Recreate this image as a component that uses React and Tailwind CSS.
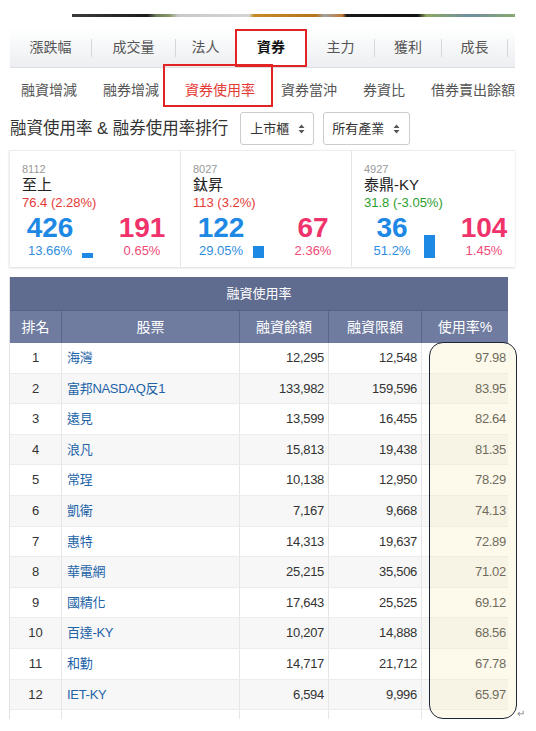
import React from 'react';

const mainTabs = [
  { label: '漲跌幅', w: 'w-[82px]', sep: true },
  { label: '成交量', w: 'w-[84px]', sep: true },
  { label: '法人', w: 'w-[59px]' },
  { label: '資券', w: 'w-[72px]', active: true },
  { label: '主力', w: 'w-[68px]', sep: true },
  { label: '獲利', w: 'w-[67px]', sep: true },
  { label: '成長', w: 'w-[66px]', sep: true },
];

const subTabs = ['融資增減', '融券增減', '資券使用率', '資券當沖', '券資比', '借券賣出餘額'];

const cards = [
  { code: '8112', name: '至上', change: '76.4 (2.28%)', up: true, a: '426', ap: '13.66%', b: '191', bp: '0.65%', bar: 5 },
  { code: '8027', name: '鈦昇', change: '113 (3.2%)', up: true, a: '122', ap: '29.05%', b: '67', bp: '2.36%', bar: 12 },
  { code: '4927', name: '泰鼎-KY', change: '31.8 (-3.05%)', up: false, a: '36', ap: '51.2%', b: '104', bp: '1.45%', bar: 23 },
];

const rows = [
  ['1', '海灣', '12,295', '12,548', '97.98'],
  ['2', '富邦NASDAQ反1', '133,982', '159,596', '83.95'],
  ['3', '遠見', '13,599', '16,455', '82.64'],
  ['4', '浪凡', '15,813', '19,438', '81.35'],
  ['5', '常珵', '10,138', '12,950', '78.29'],
  ['6', '凱衛', '7,167', '9,668', '74.13'],
  ['7', '惠特', '14,313', '19,637', '72.89'],
  ['8', '華電網', '25,215', '35,506', '71.02'],
  ['9', '國精化', '17,643', '25,525', '69.12'],
  ['10', '百達-KY', '10,207', '14,888', '68.56'],
  ['11', '和勤', '14,717', '21,712', '67.78'],
  ['12', 'IET-KY', '6,594', '9,996', '65.97'],
  ['', '', '', '', ''],
];

function SortArrows() {
  return (
    <svg width="7" height="10" viewBox="0 0 7 10" className="fill-[#555]">
      <path d="M3.5 0.5 L6.5 4 H0.5Z M0.5 6 H6.5 L3.5 9.5Z" />
    </svg>
  );
}

function StockCard({ card }) {
  return (
    <div className="w-[171px] shrink-0 border-r border-[#e6e6e6] pl-[12px] pt-[11px] pb-[9px]">
      <div className="text-[11px] leading-[14px] text-[#999]">{card.code}</div>
      <div className="text-[15px] leading-[18px] text-[#222]">{card.name}</div>
      <div className={`text-[13px] leading-[18px] ${card.up ? 'text-[#e53935]' : 'text-[#2ca02c]'}`}>
        {card.change}
      </div>
      <div className="flex items-end">
        <div className="w-[56px] flex flex-col items-center">
          <div className="text-[28px] leading-[32px] font-bold text-[#1e88e5]">{card.a}</div>
          <div className="text-[13px] leading-[14px] text-[#2f8de0]">{card.ap}</div>
        </div>
        <div className="w-[36px] pl-[4px] flex items-end">
          <div className="w-[11px] bg-[#1e88e5]" style={{ height: card.bar }} />
        </div>
        <div className="w-[56px] flex flex-col items-center">
          <div className="text-[28px] leading-[32px] font-bold text-[#f0336b]">{card.b}</div>
          <div className="text-[13px] leading-[14px] text-[#ef4a78]">{card.bp}</div>
        </div>
      </div>
    </div>
  );
}

export default function App() {
  return (
    <div className="relative w-[536px] h-[731px] overflow-hidden bg-white font-['Liberation_Sans','Noto_Sans_CJK_TC',sans-serif] text-[#333]">
      {/* banner strip */}
      <div className="pt-[14px]">
        <div className="ml-[72px] w-[443px] h-[3px] bg-[linear-gradient(90deg,#3a3a3a_0%,#1c1c1c_17%,#6b7a5a_19%,#8a9a6a_22%,#c9c9c9_24%,#d4d4d4_40%,#c98a2a_41%,#b5741c_55%,#a0a0a0_57%,#c07a30_61%,#1a1a1a_62%,#121212_78%,#8ba860_80%,#6f8ea0_90%,#8aa870_100%)]" />
      </div>

      {/* main tabs */}
      <div className="mt-[11px] ml-[10px] w-[505px] h-[40px] flex items-stretch bg-gradient-to-b from-white to-[#eceef1] border-b border-[#dcdfe3]">
        {mainTabs.map((t) => (
          <div key={t.label} className={`${t.w} flex items-center`}>
            <div
              className={`flex-1 h-full flex items-center justify-center text-[14px] ${
                t.active ? 'bg-white font-bold text-[#111]' : 'text-[#555]'
              }`}
            >
              {t.label}
            </div>
            {t.sep && <div className="w-px h-[18px] bg-[#d5d7da]" />}
          </div>
        ))}
      </div>

      {/* sub tabs */}
      <div className="h-[44px] pl-[21px] flex items-center gap-[26px] text-[14px] whitespace-nowrap">
        {subTabs.map((s) => (
          <span key={s} className={s === '資券使用率' ? 'text-[#e53935]' : 'text-[#555]'}>
            {s}
          </span>
        ))}
      </div>

      {/* title row */}
      <div className="h-[33px] pl-[10px] flex items-center">
        <h1 className="text-[16.5px] text-[#333] whitespace-nowrap">融資使用率 &amp; 融券使用率排行</h1>
        <div className="ml-[12px] w-[74px] h-[33px] border border-[#ccc] rounded-[3px] flex items-center pl-[9px] gap-[9px] text-[13px]">
          上市櫃 <SortArrows />
        </div>
        <div className="ml-[9px] w-[87px] h-[33px] border border-[#ccc] rounded-[3px] flex items-center pl-[8px] gap-[9px] text-[13px]">
          所有產業 <SortArrows />
        </div>
      </div>

      {/* cards */}
      <div className="mt-[5px] ml-[9px] w-[506px] flex overflow-hidden border-t border-l border-[#eceef0] shadow-[0_1px_2px_rgba(0,0,0,0.15)]">
        {cards.map((c) => (
          <StockCard key={c.code} card={c} />
        ))}
      </div>

      {/* table */}
      <div className="mt-[10px] ml-[9px] w-[499px] h-[442px] overflow-hidden border-l border-[#e2e2e2]">
        <div className="h-[34px] bg-[#5f6b8f] text-white text-[13px] flex items-center justify-center border-b border-[#56618a]">
          融資使用率
        </div>
        <div className="h-[32px] grid grid-cols-[52px_178px_89px_93px_87px] bg-[#6f7b9f] text-white text-[14px]">
          {['排名', '股票', '融資餘額', '融資限額', '使用率%'].map((h) => (
            <div key={h} className="flex items-center justify-center border-r border-[#5b668b]">
              {h}
            </div>
          ))}
        </div>
        {rows.map((r, i) => (
          <div
            key={i}
            className={`h-[30.6px] grid grid-cols-[52px_178px_89px_93px_87px] border-b border-[#ececec] text-[13px] ${
              i % 2 === 1 ? 'bg-[#f7f7f7]' : 'bg-white'
            }`}
          >
            <div className="flex items-center justify-center border-r border-[#e6e6e6] text-[#333]">{r[0]}</div>
            <div className="flex items-center pl-[5px] border-r border-[#e6e6e6] text-[#2263a8] tracking-[-0.3px]">{r[1]}</div>
            <div className="flex items-center justify-end pr-[4px] border-r border-[#e6e6e6] tracking-[-0.3px]">{r[2]}</div>
            <div className="flex items-center justify-end pr-[4px] border-r border-[#e6e6e6] tracking-[-0.3px]">{r[3]}</div>
            <div className="flex items-center justify-end pr-[3px] tracking-[-0.3px]">{r[4]}</div>
          </div>
        ))}
      </div>

      {/* annotation overlays */}
      <div className="absolute left-[235px] top-[29px] w-[72px] h-[38px] border-2 border-[#e02424]" />
      <div className="absolute left-[163px] top-[64px] w-[110px] h-[43px] border-2 border-[#e02424]" />
      <div className="absolute left-[429px] top-[342px] w-[88px] h-[377px] rounded-[14px] border border-[#1d2637] bg-[rgba(250,234,190,0.3)]" />
      <div className="absolute left-[517px] top-[706px] text-[10px] text-[#888]">↵</div>
    </div>
  );
}
